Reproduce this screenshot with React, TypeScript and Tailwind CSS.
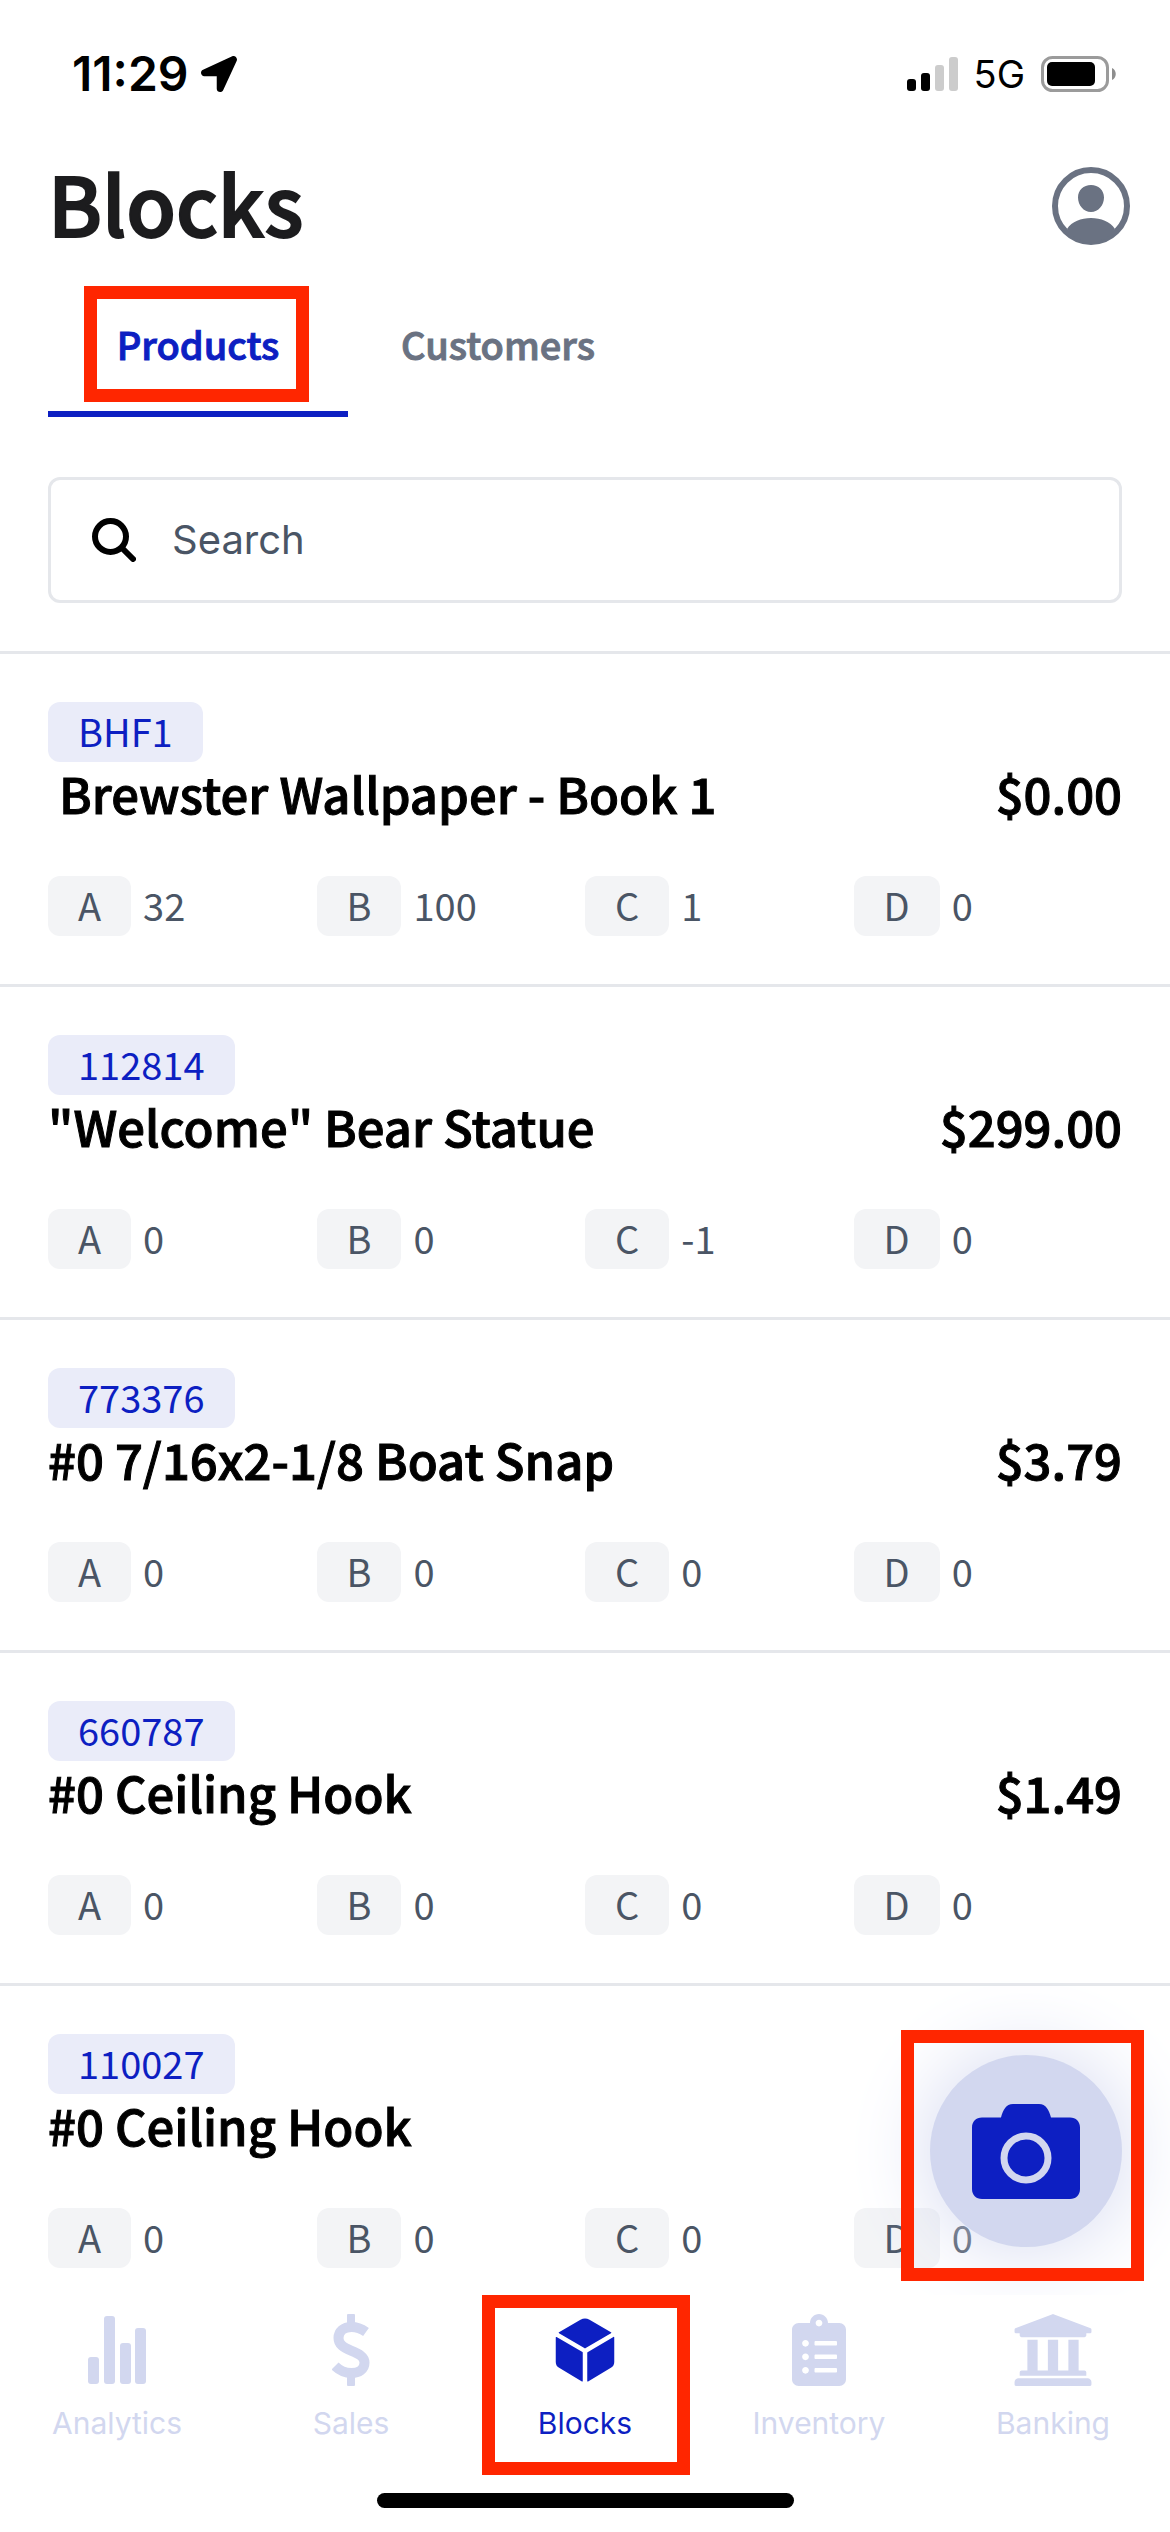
import { useState } from "react";
import type { ReactNode } from "react";
import { FaClipboardList, FaLocationArrow, FaUniversity } from "react-icons/fa";
import { IoCube } from "react-icons/io5";

type Product = {
  sku: string;
  name: string;
  price: string;
  stock: [string, string][];
};

const products: Product[] = [
  {
    sku: "BHF1",
    name: " Brewster Wallpaper - Book 1",
    price: "$0.00",
    stock: [["A", "32"], ["B", "100"], ["C", "1"], ["D", "0"]],
  },
  {
    sku: "112814",
    name: '"Welcome" Bear Statue',
    price: "$299.00",
    stock: [["A", "0"], ["B", "0"], ["C", "-1"], ["D", "0"]],
  },
  {
    sku: "773376",
    name: "#0 7/16x2-1/8 Boat Snap",
    price: "$3.79",
    stock: [["A", "0"], ["B", "0"], ["C", "0"], ["D", "0"]],
  },
  {
    sku: "660787",
    name: "#0 Ceiling Hook",
    price: "$1.49",
    stock: [["A", "0"], ["B", "0"], ["C", "0"], ["D", "0"]],
  },
  {
    sku: "110027",
    name: "#0 Ceiling Hook",
    price: "",
    stock: [["A", "0"], ["B", "0"], ["C", "0"], ["D", "0"]],
  },
];

export default function App() {
  const [tab, setTab] = useState("Products");
  const [query, setQuery] = useState("");

  return (
    <div className="flex h-screen flex-col overflow-hidden bg-white font-['Noto_Sans_CJK_SC',sans-serif]">
      <StatusBar />

      <header className="flex h-[116px] shrink-0 items-center justify-between pl-12 pr-10">
        <h1 className="pb-2 text-[81px] font-medium leading-[96px] text-[#1c1c1e] [-webkit-text-stroke:2px]">
          Blocks
        </h1>
        <button type="button" aria-label="Account">
          <ProfileIcon />
        </button>
      </header>

      <div role="tablist" className="flex shrink-0 px-12">
        <Tab
          active={tab === "Products"}
          marked
          onClick={() => setTab("Products")}
        >
          Products
        </Tab>
        <Tab
          active={tab === "Customers"}
          onClick={() => setTab("Customers")}
        >
          Customers
        </Tab>
      </div>

      <div className="shrink-0 px-12 pb-12 pt-[60px]">
        <label className="flex h-[126px] items-center gap-9 rounded-[12px] border-[3px] border-gray-200 px-[41px]">
          <SearchIcon />
          <input
            type="search"
            aria-label="Search"
            placeholder="Search"
            value={query}
            onChange={(e) => setQuery(e.target.value)}
            className="min-w-0 flex-1 bg-transparent font-['Inter',sans-serif] text-[40px] leading-[48px] text-gray-600 outline-none placeholder:text-gray-600"
          />
        </label>
      </div>

      {/* List, with the scan button floating over it */}
      <main className="relative min-h-0 flex-1 overflow-hidden">
        <ul>
          {products.map((p) => (
            <ProductRow key={p.sku} product={p} />
          ))}
        </ul>
        <button
          type="button"
          aria-label="Scan product"
          className="absolute bottom-12 right-12 flex size-48 items-center justify-center rounded-full bg-[#d2d7ef] shadow-[0_0_84px_#d2d7ef]"
        >
          <CameraIcon />
        </button>
        <Marker className="bottom-[14px] right-[26px] h-[251px] w-[243px]" />
      </main>

      <nav className="flex h-[198px] shrink-0 bg-white">
        <NavItem label="Analytics" icon={<StatsIcon />} />
        <NavItem label="Sales" icon={<DollarIcon />} />
        <NavItem label="Blocks" active icon={<IoCube className="size-[72px]" />} />
        <NavItem
          label="Inventory"
          icon={<FaClipboardList className="size-[72px]" />}
        />
        <NavItem
          label="Banking"
          icon={<FaUniversity className="size-[82px]" />}
        />
      </nav>
      <div className="mb-6 h-[15px] w-[417px] shrink-0 self-center rounded-full bg-black" />
    </div>
  );
}

function StatusBar() {
  return (
    <div className="flex h-[148px] shrink-0 items-center justify-between pl-[72px] pr-[54px] font-['Inter',sans-serif] text-black">
      <div className="flex items-center gap-3">
        <span className="text-[48px] font-semibold leading-[56px]">11:29</span>
        <FaLocationArrow className="size-9" />
      </div>
      <div className="flex items-center gap-4">
        <svg viewBox="0 0 51 34" className="h-[34px] w-[51px]">
          <rect x="0" y="22" width="9" height="12" rx="3" />
          <rect x="14" y="16" width="9" height="18" rx="3" />
          <rect x="28" y="8" width="9" height="26" rx="3" fill="#cccccc" />
          <rect x="42" y="0" width="9" height="34" rx="3" fill="#cccccc" />
        </svg>
        <span className="text-[38px] leading-[48px]">5G</span>
        <svg viewBox="0 0 75 36" className="h-9 w-[75px]">
          <rect
            x="1.5"
            y="1.5"
            width="65"
            height="33"
            rx="10"
            fill="none"
            stroke="#9b9b9b"
            strokeWidth="3"
          />
          <rect x="6" y="6" width="48" height="24" rx="5" />
          <path d="M71 12c5 2 5 10 0 12z" fill="#8e8e8e" />
        </svg>
      </div>
    </div>
  );
}

function Tab({
  active,
  marked,
  onClick,
  children,
}: {
  active: boolean;
  marked?: boolean;
  onClick: () => void;
  children: ReactNode;
}) {
  return (
    <button
      type="button"
      role="tab"
      aria-selected={active}
      onClick={onClick}
      className={`relative flex h-[153px] w-[300px] items-center justify-center border-b-[6px] pt-3 text-[38px] font-medium leading-[48px] [-webkit-text-stroke:1px] ${
        active
          ? "border-[#0d1fc2] text-[#0d1fc2]"
          : "border-transparent text-gray-500"
      }`}
    >
      {children}
      {marked && <Marker className="left-9 top-[22px] h-[116px] w-[225px]" />}
    </button>
  );
}

function ProductRow({ product }: { product: Product }) {
  return (
    <li className="border-t-[3px] border-gray-200 px-12 py-12">
      <span className="inline-block h-[60px] rounded-[12px] bg-[#eaecf9] px-[30px] align-top text-[38px] leading-[58px] text-[#0d1fc2]">
        {product.sku}
      </span>
      <div className="mb-[52px] flex justify-between whitespace-pre text-[49px] font-medium leading-[62px] text-black [-webkit-text-stroke:1px]">
        <h2>{product.name}</h2>
        <span>{product.price}</span>
      </div>
      <dl className="grid grid-cols-4 text-[38px] leading-[58px] text-gray-600">
        {product.stock.map(([bin, count]) => (
          <div key={bin} className="flex h-[60px] gap-3">
            <dt className="rounded-[12px] bg-gray-100 px-[30px]">{bin}</dt>
            <dd>{count}</dd>
          </div>
        ))}
      </dl>
    </li>
  );
}

function NavItem({
  label,
  icon,
  active,
}: {
  label: string;
  icon: ReactNode;
  active?: boolean;
}) {
  return (
    <button
      type="button"
      className={`relative flex flex-1 flex-col items-center pt-[14px] font-['Inter',sans-serif] text-[30px] leading-9 ${
        active ? "text-[#0d1fc2]" : "text-[#d2d7ef]"
      }`}
    >
      <span className="mb-[14px] flex h-[82px] items-center">{icon}</span>
      {label}
      {active && <Marker className="left-[14px] top-0 h-[180px] w-[208px]" />}
    </button>
  );
}

// Red callout frame
function Marker({ className }: { className: string }) {
  return (
    <span
      aria-hidden="true"
      className={`pointer-events-none absolute border-[13px] border-[#ff2600] ${className}`}
    />
  );
}

function ProfileIcon() {
  return (
    <svg viewBox="0 0 78 78" className="size-[78px] text-gray-500">
      <circle
        cx="39"
        cy="39"
        r="36"
        fill="none"
        stroke="currentColor"
        strokeWidth="6"
      />
      <path
        fill="currentColor"
        d="M39 18c7.500 0 13 5 13 12.500S46.500 45 39 45s-13-7-13-14.500S31.500 18 39 18zM15 62c5-7.500 14-11 24-11s19 3.500 24 11A34 36 0 0 1 39 76A34 36 0 0 1 15 62z"
      />
    </svg>
  );
}

function SearchIcon() {
  return (
    <svg
      viewBox="0 0 44 44"
      className="size-11 shrink-0"
      fill="none"
      stroke="black"
      strokeWidth="6"
      strokeLinecap="round"
    >
      <circle cx="18.500" cy="18.500" r="15.500" />
      <path d="M30.500 30.500 41 41" />
    </svg>
  );
}

function CameraIcon() {
  return (
    <svg viewBox="0 0 108 95" className="h-[95px] w-[108px]">
      <path
        fill="#0d1fc2"
        d="M10 13.500h19C31 6 34 0 41 0h26c7 0 10 6 12 13.500h19c6 0 10 4 10 10V85c0 6-4 10-10 10H10C4 95 0 91 0 85V23.500c0-6 4-10 10-10z"
      />
      <circle
        cx="54"
        cy="54"
        r="22"
        fill="none"
        stroke="#d2d7ef"
        strokeWidth="7"
      />
    </svg>
  );
}

function StatsIcon() {
  return (
    <svg viewBox="0 0 59 68" className="h-[68px] w-[59px]" fill="currentColor">
      <rect x="0" y="41" width="11" height="27" rx="3" />
      <rect x="16" y="0" width="11" height="68" rx="3" />
      <rect x="32" y="27" width="11" height="41" rx="3" />
      <rect x="47" y="12" width="11" height="56" rx="3" />
    </svg>
  );
}

function DollarIcon() {
  return (
    <svg viewBox="0 0 38 72" className="h-[72px] w-[38px]">
      <rect x="15" y="0" width="8" height="12" rx="1" fill="currentColor" />
      <rect x="15" y="60" width="8" height="12" rx="1" fill="currentColor" />
      <path
        fill="none"
        stroke="currentColor"
        strokeWidth="10"
        d="M34 18C29 14.500 24 13 19.500 13c-8 0-13 4.500-13 11 0 6.500 5 9.500 12.500 12.700 8 3.300 13.500 5.800 13.500 12 0 6.300-5.500 10.300-13 10.300-6.500 0-12-2.500-16.500-7"
      />
    </svg>
  );
}
